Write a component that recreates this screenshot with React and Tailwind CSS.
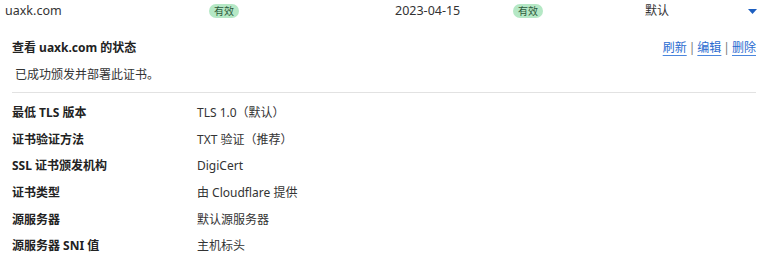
import React from "react";

const font = { fontFamily: '"Noto Sans", "Noto Sans CJK SC", sans-serif' };

function Badge() {
  return (
    <span className="inline-flex h-[14px] w-[30px] items-center justify-center rounded-full bg-[#b5e8c5] text-[10px] leading-none text-[#2d5a3c]">
      有效
    </span>
  );
}

const rows = [
  ["最低 TLS 版本", "TLS 1.0（默认）"],
  ["证书验证方法", "TXT 验证（推荐）"],
  ["SSL 证书颁发机构", "DigiCert"],
  ["证书类型", "由 Cloudflare 提供"],
  ["源服务器", "默认源服务器"],
  ["源服务器 SNI 值", "主机标头"],
];

export default function App() {
  return (
    <div className="h-[257px] w-[768px] overflow-hidden bg-white text-[12px] text-[#333]" style={font}>
      <div className="grid h-[22px] grid-cols-[204px_186px_118px_132px_1fr] items-center pl-[5px] pr-[11px]">
        <span className="text-[12.5px]">uaxk.com</span>
        <span><Badge /></span>
        <span className="text-[12.5px]">2023-04-15</span>
        <span><Badge /></span>
        <div className="flex items-center justify-between">
          <span>默认</span>
          <svg width="9" height="5" viewBox="0 0 9 5"><path d="M0 0H9L4.5 5Z" fill="#1d5fc0" /></svg>
        </div>
      </div>
      <div className="pl-[12px] pr-[12px]">
        <div className="mt-[17px] flex items-center justify-between">
          <span className="font-bold text-[#222]">查看 uaxk.com 的状态</span>
          <span className="flex items-center gap-[2px] text-[#2a6bd0]">
            <a className="underline decoration-[#4a86dd] underline-offset-[3px]">刷新</a>
            <span className="text-[#777]">|</span>
            <a className="underline decoration-[#4a86dd] underline-offset-[3px]">编辑</a>
            <span className="text-[#777]">|</span>
            <a className="underline decoration-[#4a86dd] underline-offset-[3px]">删除</a>
          </span>
        </div>
        <div className="mt-[9px] pl-[3px]">已成功颁发并部署此证书。</div>
        <div className="mt-[8px] h-px bg-[#e2e2e2]" />
        <div className="mt-[7px]">
          {rows.map(([k, v]) => (
            <div key={k} className="grid h-[26.6px] grid-cols-[185px_1fr] items-center">
              <span className="font-bold text-[#222]">{k}</span>
              <span>{v}</span>
            </div>
          ))}
        </div>
      </div>
    </div>
  );
}
